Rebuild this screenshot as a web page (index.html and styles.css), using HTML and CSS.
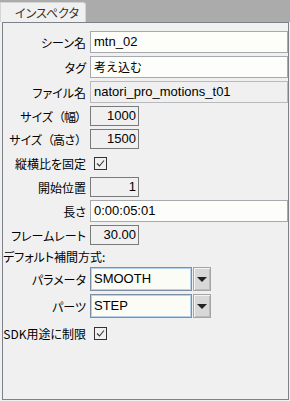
FILE: index.html
```html
<!DOCTYPE html>
<html lang="ja">
<head>
    <meta charset="UTF-8">
    <title>インスペクタ</title>
    <link rel="stylesheet" href="styles.css">
</head>
<body>
    <div class="tab-bar">
        <div class="tab">インスペクタ</div>
    </div>

    <div class="panel">
        <div class="row h22">
            <div class="label">シーン名</div>
            <div class="field">mtn_02</div>
        </div>
        <div class="row h22">
            <div class="label">タグ</div>
            <div class="field jp">考え込む</div>
        </div>
        <div class="row h22">
            <div class="label">ファイル名</div>
            <div class="field disabled">natori_pro_motions_t01</div>
        </div>
        <div class="row h20">
            <div class="label">サイズ<span class="wide">（幅）</span></div>
            <div class="num">1000</div>
        </div>
        <div class="row h20">
            <div class="label">サイズ<span class="wide">（高さ）</span></div>
            <div class="num">1500</div>
        </div>
        <div class="row h22">
            <div class="label">縦横比を固定</div>
            <span class="check">
                <svg width="13" height="13" viewBox="0 0 13 13"><rect x="0.5" y="0.5" width="12" height="12" fill="#f0f0f0" stroke="#333"/><polyline points="3,6.5 5.5,9 10,3.5" fill="none" stroke="#333" stroke-width="1.1"/></svg>
            </span>
        </div>
        <div class="row h20">
            <div class="label">開始位置</div>
            <div class="num">1</div>
        </div>
        <div class="row h22">
            <div class="label">長さ</div>
            <div class="field">0:00:05:01</div>
        </div>
        <div class="row h20">
            <div class="label">フレームレート</div>
            <div class="num">30.00</div>
        </div>
        <div class="row h16">
            <div class="section">デフォルト補間方式:</div>
        </div>
        <div class="row h24">
            <div class="label">パラメータ</div>
            <div class="select">SMOOTH</div>
            <div class="drop"><span class="arrow"></span></div>
        </div>
        <div class="row h24">
            <div class="label">パーツ</div>
            <div class="select">STEP</div>
            <div class="drop"><span class="arrow"></span></div>
        </div>
        <div class="row h25">
            <div class="label">SDK用途に制限</div>
            <span class="check">
                <svg width="13" height="13" viewBox="0 0 13 13"><rect x="0.5" y="0.5" width="12" height="12" fill="#f0f0f0" stroke="#333"/><polyline points="3,6.5 5.5,9 10,3.5" fill="none" stroke="#333" stroke-width="1.1"/></svg>
            </span>
        </div>
    </div>
</body>
</html>
```

FILE: styles.css
```css
html, body {
    margin: 0;
    padding: 0;
}
body {
    width: 290px;
    height: 401px;
    background-color: #f0f0f0;
    font-family: 'Liberation Sans', 'Noto Sans CJK JP', sans-serif;
    font-size: 13px;
    color: #000;
    overflow: hidden;
}
.tab-bar {
    height: 22px;
    background-color: #ababab;
    box-sizing: border-box;
    padding-top: 2px;
}
.tab {
    width: 86px;
    height: 20px;
    box-sizing: border-box;
    background-color: #f0f0f0;
    border: 1px solid #d4d4d4;
    border-bottom: none;
    border-top-right-radius: 3px;
    padding-left: 14px;
    font-family: 'Noto Sans CJK JP', sans-serif;
    font-feature-settings: "palt";
    font-size: 12px;
    line-height: 19px;
    color: #333;
}
.panel {
    height: 378px;
    margin: 0 1px 1px 2px;
    box-sizing: border-box;
    border: 1px solid #7c8088;
    padding-top: 8px;
    display: flex;
    flex-direction: column;
    gap: 3px;
}
.row {
    display: flex;
    align-items: center;
}
.h16 { height: 16px; }
.h20 { height: 20px; }
.h22 { height: 22px; }
.h24 { height: 24px; }
.h25 { height: 25px; }
.label {
    width: 83px;
    margin-right: 4px;
    flex-shrink: 0;
    text-align: right;
    font-family: 'Noto Sans CJK JP', sans-serif;
    font-feature-settings: "palt";
    font-size: 12px;
    white-space: nowrap;
}
.label .wide {
    font-feature-settings: normal;
    letter-spacing: -1px;
}
.section {
    font-family: 'Noto Sans CJK JP', sans-serif;
    font-feature-settings: "palt";
    font-size: 12px;
    white-space: nowrap;
}
.field {
    flex: 1;
    height: 100%;
    box-sizing: border-box;
    background-color: #fdfdf9;
    border: 1px solid #a6a9ad;
    padding-left: 3px;
    line-height: 20px;
    white-space: nowrap;
    overflow: hidden;
}
.field.jp {
    font-family: 'Noto Sans CJK JP', sans-serif;
    font-size: 12px;
}
.field.disabled {
    background-color: #f0f0f0;
    border-color: #b8babd;
}
.num {
    width: 49px;
    height: 100%;
    box-sizing: border-box;
    border: 1px solid #7a7a7a;
    text-align: right;
    padding-right: 2px;
    line-height: 18px;
}
.check {
    display: flex;
    margin-left: 4px;
}
.select {
    width: 102px;
    height: 100%;
    box-sizing: border-box;
    background-color: #fcfcf6;
    border: 1px solid #7d8da4;
    box-shadow: inset 0 0 0 1px #b9d2ec;
    padding-left: 3px;
    line-height: 22px;
}
.drop {
    width: 18px;
    height: 100%;
    margin-left: 1px;
    box-sizing: border-box;
    border: 1px solid #a4a4a4;
    box-shadow: inset 1px 1px 0 #f4f4f4, inset -1px -1px 0 #bcbcbc;
    background-color: #d8d8d8;
    display: flex;
    align-items: center;
    justify-content: center;
}
.arrow {
    width: 0;
    height: 0;
    border-left: 5px solid transparent;
    border-right: 5px solid transparent;
    border-top: 5px solid #222;
}
```
